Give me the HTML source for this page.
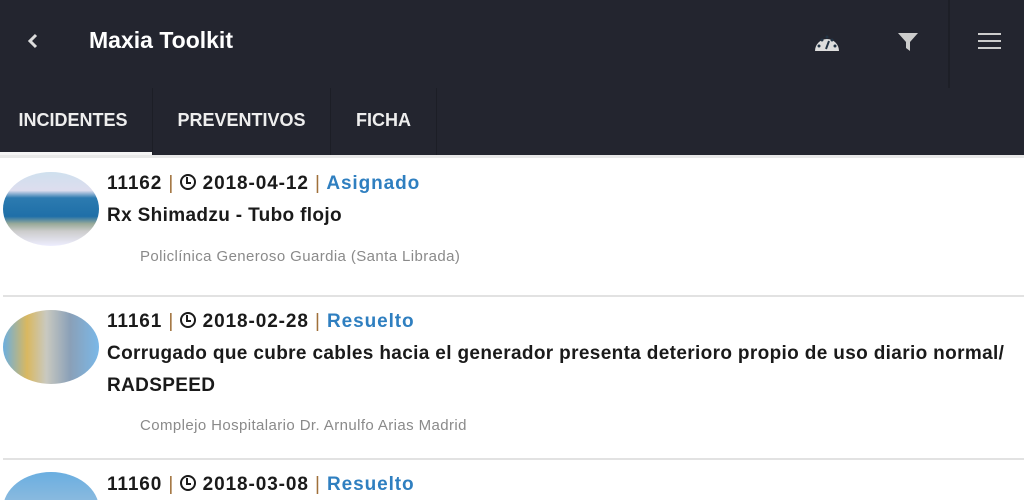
<!DOCTYPE html>
<html><head><meta charset="utf-8"><style>
*{margin:0;padding:0;box-sizing:border-box}
html,body{width:1024px;height:500px;overflow:hidden}
body{background:#fff;font-family:"Liberation Sans",sans-serif;position:relative}
.hdr{position:absolute;left:0;top:0;width:1024px;height:155px;background:#23252f}
.t{position:absolute;color:#fff;font-weight:bold}
.tab{position:absolute;top:88px;height:67px;border-right:1px solid #1c1e26;color:#eee;font-weight:bold;font-size:18px;line-height:64px;text-align:center}
.abs{position:absolute}
.l1{position:absolute;left:107px;font-size:19px;font-weight:bold;color:#1a1a1a;white-space:nowrap;letter-spacing:0.9px}
.l1 .p{color:#a0703a;font-weight:normal}
.l1 .s{color:#2f7fc0}
.l2{position:absolute;left:107px;font-size:19px;font-weight:bold;color:#1a1a1a;line-height:32px;letter-spacing:0.35px}
.addr{position:absolute;left:140px;font-size:15px;color:#8a8a8a;letter-spacing:0.4px}
.div{position:absolute;left:3px;right:0;height:2px;background:#e2e2e2}
.img{position:absolute;left:3px;width:96px;height:74px;border-radius:50%;overflow:hidden}
.clk{display:inline-block;width:16px;height:16px;border:2px solid #1a1a1a;border-radius:50%;position:relative;vertical-align:-1px}
.clk:after{content:"";position:absolute;left:4px;top:1px;width:3px;height:5px;border-left:2px solid #1a1a1a;border-bottom:2px solid #1a1a1a}
</style></head><body>
<div class="hdr"></div>
<svg class="abs" style="left:26px;top:32px" width="14" height="18"><path d="M10 3 L4 9 L10 15" stroke="#ddd" stroke-width="3" fill="none"/></svg>
<div class="t" style="left:89px;top:27px;font-size:23px">Maxia Toolkit</div>
<svg class="abs" style="left:814px;top:31px" width="26" height="22"><path d="M1 20 A12 12 0 0 1 25 20 Z" fill="#ddd"/><circle cx="5" cy="15" r="1.5" fill="#234"/><circle cx="8" cy="9" r="1.5" fill="#234"/><circle cx="13" cy="6" r="1.5" fill="#234"/><circle cx="21" cy="15" r="1.5" fill="#234"/><circle cx="18" cy="9" r="1.5" fill="#234"/><path d="M12 18 L15 10" stroke="#234" stroke-width="2"/></svg>
<svg class="abs" style="left:897px;top:31px" width="22" height="22"><path d="M1 2 H21 L13 11 V20 L9 17 V11 Z" fill="#ccc"/></svg>
<div class="abs" style="left:948px;top:0;width:2px;height:88px;background:#1d1f27"></div>
<div class="abs" style="left:978px;top:33px;width:23px;height:2px;background:#ccc"></div>
<div class="abs" style="left:978px;top:40px;width:23px;height:2px;background:#ccc"></div>
<div class="abs" style="left:978px;top:47px;width:23px;height:2px;background:#ccc"></div>
<div class="tab" style="left:0;width:153px;padding-right:6px">INCIDENTES</div>
<div class="tab" style="left:153px;width:178px">PREVENTIVOS</div>
<div class="tab" style="left:331px;width:106px">FICHA</div>
<div class="abs" style="left:0;top:152px;width:152px;height:3px;background:#f4f4f4"></div>
<div class="abs" style="left:0;top:155px;width:1024px;height:3px;background:#e8e8e8"></div>

<div class="img" style="top:172px;background:linear-gradient(#cfe0ee 0%,#dde 25%,#2c7bb0 35%,#1f6fa8 60%,#9a9 70%,#ccc 80%,#eef 100%)"></div>
<div class="l1" style="top:173px">11162 <span class="p">|</span> <span class="clk"></span> 2018-04-12 <span class="p">|</span> <span class="s">Asignado</span></div>
<div class="l2" style="top:200px">Rx Shimadzu - Tubo flojo</div>
<div class="addr" style="top:248px">Policlínica Generoso Guardia (Santa Librada)</div>
<div class="div" style="top:295px"></div>

<div class="img" style="top:310px;background:linear-gradient(90deg,#6aaee0 0%,#d9b860 25%,#c9c9c0 45%,#8aa0b8 70%,#7ab8e8 100%)"></div>
<div class="l1" style="top:311px">11161 <span class="p">|</span> <span class="clk"></span> 2018-02-28 <span class="p">|</span> <span class="s">Resuelto</span></div>
<div class="l2" style="top:338px;width:915px">Corrugado que cubre cables hacia el generador presenta deterioro propio de uso diario normal/ RADSPEED</div>
<div class="addr" style="top:417px">Complejo Hospitalario Dr. Arnulfo Arias Madrid</div>
<div class="div" style="top:458px"></div>

<div class="img" style="top:472px;background:linear-gradient(#6aaee0,#bcd)"></div>
<div class="l1" style="top:474px">11160 <span class="p">|</span> <span class="clk"></span> 2018-03-08 <span class="p">|</span> <span class="s">Resuelto</span></div>
</body></html>
